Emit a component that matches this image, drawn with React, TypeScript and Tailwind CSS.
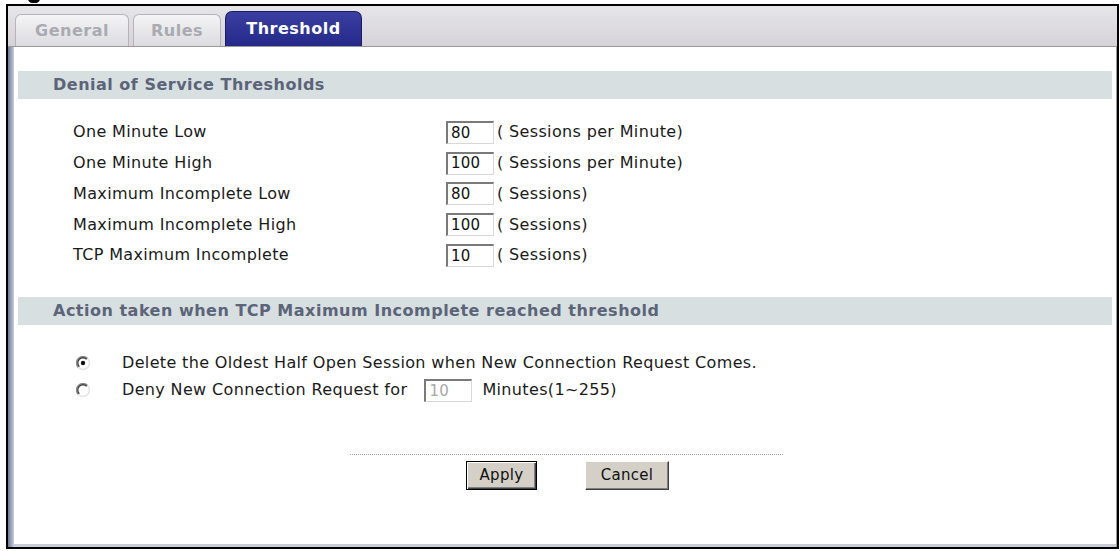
import React from "react";

const font = { fontFamily: '"DejaVu Sans", Verdana, sans-serif' };

const rows = [
  { label: "One Minute Low", value: "80", unit: "( Sessions per Minute)" },
  { label: "One Minute High", value: "100", unit: "( Sessions per Minute)" },
  { label: "Maximum Incomplete Low", value: "80", unit: "( Sessions)" },
  { label: "Maximum Incomplete High", value: "100", unit: "( Sessions)" },
  { label: "TCP Maximum Incomplete", value: "10", unit: "( Sessions)" },
];

function Radio({ checked }: { checked?: boolean }) {
  return (
    <svg width="14" height="14" viewBox="0 0 14 14" className="shrink-0">
      <circle cx="7" cy="7" r="6.4" fill="#fff" />
      <path d="M2.4 11.6 A6.4 6.4 0 0 1 11.6 2.4" fill="none" stroke="#8a8a8a" strokeWidth="1.4" />
      <path d="M3.3 10.7 A5.1 5.1 0 0 1 10.7 3.3" fill="none" stroke="#3a3a3a" strokeWidth="1.3" />
      <path d="M11.6 2.4 A6.4 6.4 0 0 1 2.4 11.6" fill="none" stroke="#e4e4e4" strokeWidth="1.4" />
      {checked && <circle cx="7" cy="7" r="2.2" fill="#111" />}
    </svg>
  );
}

function SectionHeader({ children }: { children: React.ReactNode }) {
  return (
    <div className="h-[28px] bg-[#d7dfe0] flex items-center pl-[35px] text-[16px] tracking-[0.5px] font-bold text-[#5b6479]">
      {children}
    </div>
  );
}

function TextBox({ value, disabled }: { value: string; disabled?: boolean }) {
  return (
    <div
      className={`w-[48px] h-[23px] shrink-0 bg-white border-t-2 border-l-2 border-t-[#7a7a7a] border-l-[#7a7a7a] border-r border-b border-r-[#d8d8d8] border-b-[#d8d8d8] flex items-center pl-[3px] text-[15px] tracking-[0.2px] ${
        disabled ? "text-[#a8a8a8]" : "text-[#111]"
      }`}
    >
      {value}
    </div>
  );
}

export default function App() {
  return (
    <div className="w-[1120px] h-[551px] bg-white overflow-hidden relative" style={font}>
      <div className="absolute left-[28px] -top-[6px] w-[12px] h-[9px] rounded-full bg-black" />
      <div className="ml-[6px] mt-[4px] w-[1113px] h-[545px] border-2 border-black flex flex-col">
        {/* tab bar */}
        <div className="h-[41px] bg-gradient-to-b from-[#e6e5e8] to-[#d5d3d8] border-b border-b-[#9a9a9a] flex items-end pl-[7px] gap-[4px] shrink-0">
          <div className="w-[114px] h-[32px] rounded-t-[6px] border border-b-0 border-[#b4b4b8] bg-gradient-to-b from-[#f4f4f6] to-[#dcdbdf] flex items-center justify-center text-[16px] tracking-[0.5px] font-bold text-[#aaaab2]">
            General
          </div>
          <div className="w-[88px] h-[32px] rounded-t-[6px] border border-b-0 border-[#b4b4b8] bg-gradient-to-b from-[#f4f4f6] to-[#dcdbdf] flex items-center justify-center text-[16px] tracking-[0.5px] font-bold text-[#aaaab2]">
            Rules
          </div>
          <div className="w-[137px] h-[35px] rounded-t-[7px] bg-gradient-to-b from-[#3a3fa0] to-[#24298a] border border-b-0 border-[#1a1d66] flex items-center justify-center text-[16px] tracking-[0.5px] font-bold text-white">
            Threshold
          </div>
        </div>

        {/* panel */}
        <div className="flex-1 flex bg-white border-r border-r-[#9a9a9a]">
          <div className="w-[6px] bg-gradient-to-r from-[#6f7890] via-[#9aa3b6] to-[#c6ccd8] shrink-0" />
          <div className="flex-1 flex flex-col pl-[4px] pr-[4px] pt-[24px] border-b-[3px] border-b-[#c8ccd4] text-[16px] tracking-[0.35px] text-[#1a1a1a]">
            <SectionHeader>Denial of Service Thresholds</SectionHeader>

            <div className="mt-[18px] flex flex-col pl-[55px]">
              {rows.map((r) => (
                <div key={r.label} className="h-[30.75px] flex items-center">
                  <div className="w-[373px]">{r.label}</div>
                  <TextBox value={r.value} />
                  <div className="ml-[3px]">{r.unit}</div>
                </div>
              ))}
            </div>

            <div className="mt-[26px]">
              <SectionHeader>Action taken when TCP Maximum Incomplete reached threshold</SectionHeader>
            </div>

            <div className="mt-[25px] flex flex-col pl-[58px]">
              <div className="h-[27px] flex items-center">
                <Radio checked />
                <span className="ml-[32px]">Delete the Oldest Half Open Session when New Connection Request Comes.</span>
              </div>
              <div className="h-[27px] flex items-center">
                <Radio />
                <span className="ml-[32px] mr-[17px]">Deny New Connection Request for</span>
                <TextBox value="10" disabled />
                <span className="ml-[10px]">Minutes(1~255)</span>
              </div>
            </div>

            <div className="mt-[50px] ml-[332px] w-[433px] border-t border-dotted border-t-[#a0a0a0]" />

            <div className="mt-[6px] flex">
              <button className="ml-[448px] w-[71px] h-[29px] bg-[#d4d0c8] border border-black shadow-[inset_1px_1px_0_#fff,inset_-1px_-1px_0_#404040,inset_-2px_-2px_0_#808080] text-[15px] tracking-[0.3px] text-[#111]">
                Apply
              </button>
              <button className="ml-[48px] w-[84px] h-[29px] bg-[#d4d0c8] border-t border-l border-t-white border-l-white border-r border-b border-r-[#404040] border-b-[#404040] shadow-[inset_-1px_-1px_0_#808080] text-[15px] tracking-[0.3px] text-[#111]">
                Cancel
              </button>
            </div>
          </div>
        </div>
      </div>
    </div>
  );
}
